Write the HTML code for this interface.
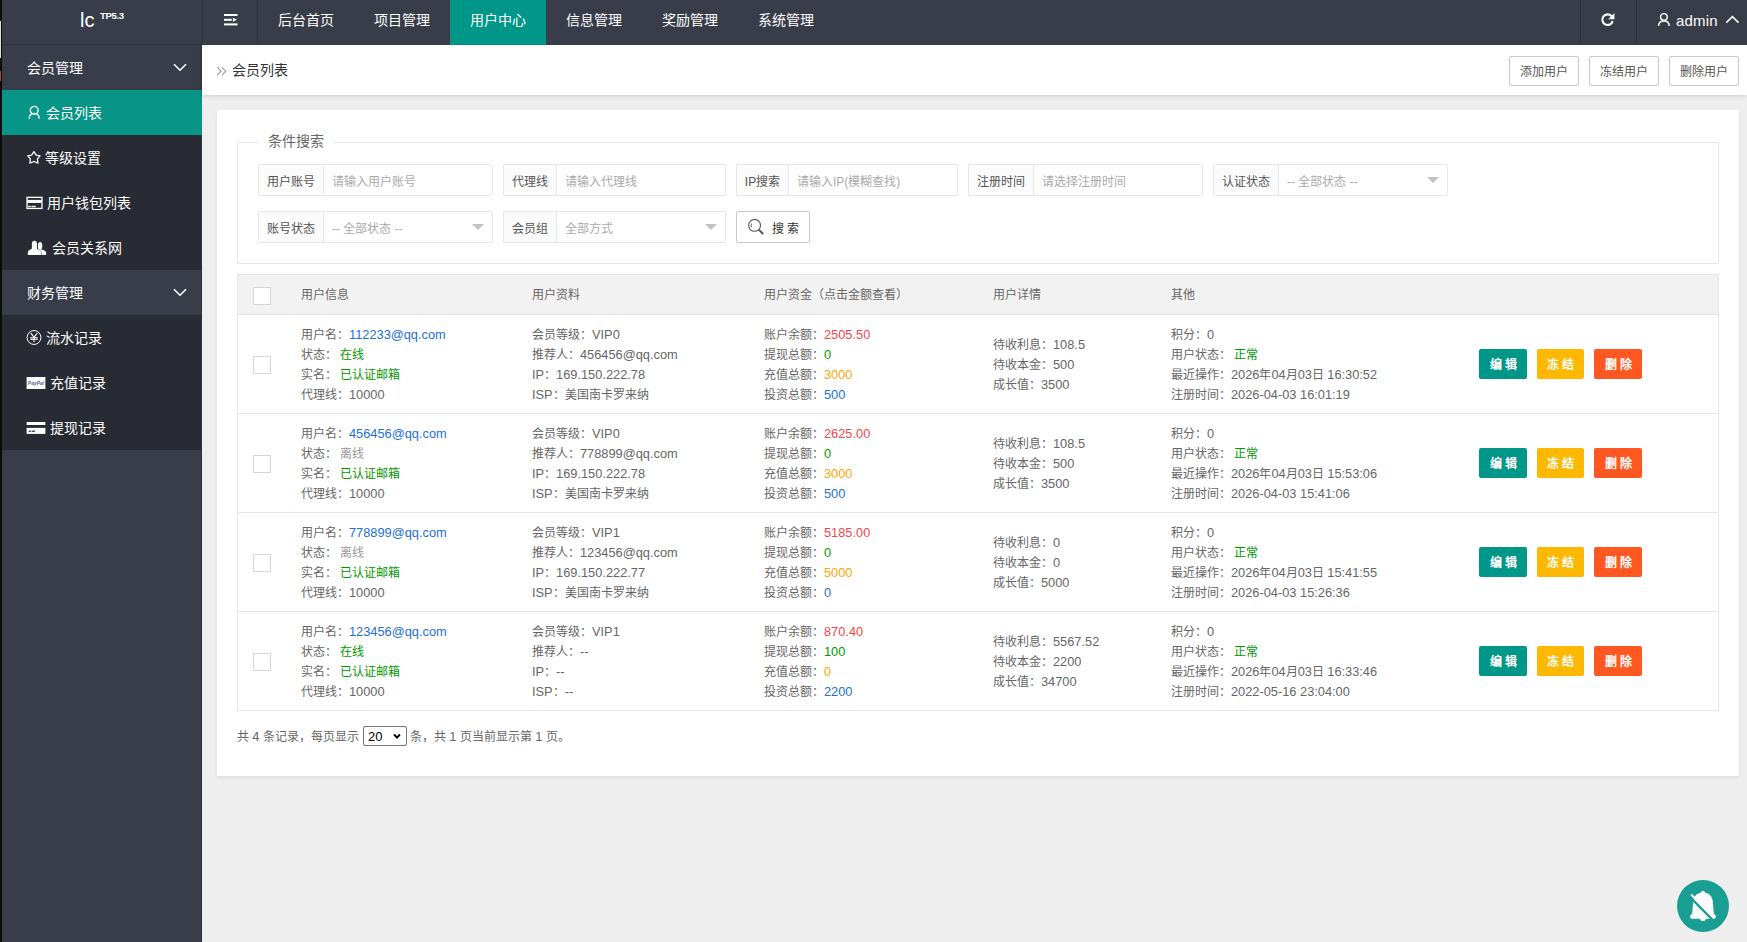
<!DOCTYPE html><html lang="zh-CN"><head><meta charset="utf-8"><title>会员列表</title><style>
*{margin:0;padding:0;box-sizing:border-box}
html,body{width:1747px;height:942px;overflow:hidden}
body{font-family:"Liberation Sans",sans-serif;font-size:14px;color:#666;background:#eeeeee;position:relative}
div,span,svg{position:absolute}
.t{white-space:nowrap}
.w{color:#fff}
.sep{top:0;width:1px;height:45px;background:#2f323c}
.nav{top:0;height:45px;width:96px;line-height:41px;color:#fff;text-align:center;font-size:14px}
.sub{left:0;width:200px;height:45px;background:#282B33}
.par{left:0;width:200px;height:45px;background:#393D49}
.mtx{line-height:20px;font-size:14px;color:#fff;white-space:nowrap}
.tbtn{top:56px;width:70px;height:30px;border:1px solid #c9c9c9;border-radius:2px;background:#fff;color:#555;font-size:12px;line-height:30px;text-align:center}
.ig{height:32px;border:1px solid #e6e6e6;border-radius:2px;background:#fff}
.lb{left:0;top:0;height:30px;background:#fbfbfb;border-right:1px solid #e6e6e6;color:#555;font-size:12px;line-height:34px;text-align:center}
.ph{top:2px;line-height:30px;font-size:12px;color:#aaa;white-space:nowrap}
.tri{width:0;height:0;border-left:6px solid transparent;border-right:6px solid transparent;border-top:6px solid #c2c2c2}
.cb{width:18px;height:18px;border:1px solid #d6d6d6;background:#fff}
.tl{font-size:12px;line-height:20px;color:#666;white-space:nowrap}
.n{position:static;font-size:12.8px}
.bl{color:#1E6FD9}
.gr{color:#009900}
.rd{color:#F04848}
.og{color:#FFA500}
.bt{top:0;height:30px;width:48px;color:#fff;font-size:12px;font-weight:bold;line-height:33px;text-align:center;border-radius:2px;letter-spacing:3px;text-indent:3px}
</style></head><body>
<div style="left:0;top:0;width:2px;height:942px;background:#0b0b0b"></div>
<div style="left:0;top:21px;width:1px;height:37px;background:#e0e0e0"></div>
<div style="left:0;top:71px;width:1px;height:10px;background:#b0502a"></div>
<div style="left:2px;top:0;width:200px;height:942px;background:#393D49">
<div style="left:0;top:44px;width:200px;height:1px;background:#30333d"></div>
<div class="t w" style="left:78px;top:6px;font-size:20px;line-height:28px">lc</div>
<div class="t w" style="left:98px;top:9.5px;font-size:9.6px;font-weight:bold;line-height:12px;letter-spacing:-0.35px">TP5.3</div>
<div class="par" style="top:45px">
<div class="mtx" style="left:25px;top:13px">会员管理</div><svg style="left:171px;top:18px" width="14" height="9" viewBox="0 0 14 9"><path d="M1 1.2 L7 7.2 L13 1.2" fill="none" stroke="#fff" stroke-width="1.6"/></svg></div>
<div class="sub" style="top:90px;background:#089487"><div class="mtx" style="left:44px;top:13px">会员列表</div>
<svg style="left:26px;top:14px" width="13" height="16" viewBox="0 0 13 16"><circle cx="6.2" cy="6.2" r="3.9" fill="none" stroke="#fff" stroke-width="1.3"/><path d="M1.2 14.8 C1.2 11.4 3.2 9.3 6.2 9.3 C9.2 9.3 11.2 11.4 11.2 14.8" fill="none" stroke="#fff" stroke-width="1.3"/></svg>
</div>
<div class="sub" style="top:135px;background:#282B33"><div class="mtx" style="left:43px;top:13px">等级设置</div>
<svg style="left:25px;top:15px" width="15" height="15" viewBox="0 0 15 15"><path d="M6.9 1.7 L9.2 5.1 L13 5.8 L10.4 8.9 L10.9 13.1 L6.9 11.5 L2.9 13.1 L3.4 8.9 L0.8 5.8 L4.6 5.1 Z" fill="none" stroke="#fff" stroke-width="1.3" stroke-linejoin="round"/></svg>
</div>
<div class="sub" style="top:180px;background:#282B33"><div class="mtx" style="left:45px;top:13px">用户钱包列表</div>
<svg style="left:24px;top:16px" width="17" height="14" viewBox="0 0 17 14"><rect x="1.05" y="1.35" width="14.9" height="11.1" fill="none" stroke="#fff" stroke-width="1.3"/><rect x="1" y="3.9" width="15" height="3.1" fill="#fff"/><rect x="2.2" y="9.8" width="2.6" height="1.4" fill="#fff"/><rect x="5.5" y="9.8" width="4.2" height="1.4" fill="#fff"/></svg>
</div>
<div class="sub" style="top:225px;background:#282B33"><div class="mtx" style="left:50px;top:13px">会员关系网</div>
<svg style="left:25px;top:15px" width="22" height="17" viewBox="0 0 22 17"><ellipse cx="13.1" cy="5.9" rx="2.2" ry="4" fill="#fff"/><path d="M11 9.8 L15.3 9.8 C17.7 10.3 19 11.3 19.1 13.1 L19.2 14.9 L12 14.9 Z" fill="#fff"/><g stroke="#282B33" stroke-width="0.9"><ellipse cx="7.45" cy="4.8" rx="2.6" ry="4" fill="#fff"/><path d="M0.8 14.9 L0.9 12.8 C1.1 10.6 2.6 9.6 5 9.1 L9.9 9.1 C12.3 9.6 13.8 10.6 14 12.8 L14.1 14.9 Z" fill="#fff"/></g><ellipse cx="7.45" cy="4.8" rx="2.6" ry="4" fill="#fff"/><path d="M0.8 14.9 L0.9 12.8 C1.1 10.6 2.6 9.6 5 9.1 L9.9 9.1 C12.3 9.6 13.8 10.6 14 12.8 L14.1 14.9 Z" fill="#fff"/><rect x="4.8" y="7" width="5.3" height="3" fill="#fff"/></svg>
</div>
<div class="par" style="top:270px"><div class="mtx" style="left:25px;top:13px">财务管理</div><svg style="left:171px;top:18px" width="14" height="9" viewBox="0 0 14 9"><path d="M1 1.2 L7 7.2 L13 1.2" fill="none" stroke="#fff" stroke-width="1.6"/></svg></div>
<div class="sub" style="top:315px"><div class="mtx" style="left:44px;top:13px">流水记录</div>
<svg style="left:24px;top:14px" width="16" height="17" viewBox="0 0 16 17"><circle cx="8" cy="8.5" r="6.95" fill="none" stroke="#fff" stroke-width="1"/><path d="M4.7 4.1 L8 8.1 L11.4 4.1 M8 8.1 L8 12.9 M4.2 8.7 L11.8 8.7 M4.2 10.3 L11.8 10.3" fill="none" stroke="#fff" stroke-width="1.1"/></svg>
</div>
<div class="sub" style="top:360px"><div class="mtx" style="left:48px;top:13px">充值记录</div>
<svg style="left:24px;top:16px" width="20" height="14" viewBox="0 0 20 14"><rect x="0.6" y="1" width="18.8" height="12" fill="#fff"/><text x="10" y="8.8" font-size="5" font-style="italic" font-weight="bold" text-anchor="middle" fill="#5a6488" font-family="Liberation Sans">PayPal</text></svg>
</div>
<div class="sub" style="top:405px"><div class="mtx" style="left:48px;top:13px">提现记录</div>
<svg style="left:24px;top:16px" width="20" height="14" viewBox="0 0 20 14"><rect x="0.6" y="1" width="18.8" height="3" fill="#fff"/><rect x="0.6" y="6.9" width="18.8" height="6" fill="#fff"/><rect x="2.7" y="9.6" width="2.2" height="1.2" fill="#282B33"/><rect x="5.6" y="9.6" width="3.4" height="1.2" fill="#282B33"/></svg>
</div>
<div style="left:199px;top:45px;width:1px;height:45px;background:#30333c"></div>
<div style="left:199px;top:135px;width:1px;height:807px;background:#30333c"></div>
</div>
<div style="left:202px;top:0;width:1545px;height:45px;background:#393D49">
<div class="sep" style="left:0"></div>
<div class="sep" style="left:55px"></div>
<svg style="left:21.5px;top:14px" width="14" height="13" viewBox="0 0 14 13"><rect x="0" y="0" width="13.5" height="2" fill="#fff"/><rect x="0" y="4.8" width="7.8" height="2" fill="#fff"/><path d="M8.9 3.8 L13 5.8 L8.9 7.8 Z" fill="#fff"/><rect x="0" y="9.4" width="13.5" height="2" fill="#fff"/></svg>
<div class="nav" style="left:56px;">后台首页</div>
<div class="nav" style="left:152px;">项目管理</div>
<div class="nav" style="left:248px;background:#009688;">用户中心</div>
<div class="nav" style="left:344px;">信息管理</div>
<div class="nav" style="left:440px;">奖励管理</div>
<div class="nav" style="left:536px;">系统管理</div>
<div class="sep" style="left:1378px"></div>
<div class="sep" style="left:1434px"></div>
<svg style="left:1398px;top:12px" width="16" height="16" viewBox="0 0 16 16"><path d="M12.7 9.1 A5.3 5.3 0 1 1 11.6 4.2" fill="none" stroke="#fff" stroke-width="2.1"/><path d="M14.4 1.1 L14.4 7.3 L8.3 7.3 Z" fill="#fff"/></svg>
<svg style="left:1455px;top:12px" width="14" height="16" viewBox="0 0 14 16"><circle cx="6.9" cy="4.9" r="3.3" fill="none" stroke="#fff" stroke-width="1.4"/><path d="M1.6 14 C1.6 10.9 3.8 9 6.9 9 C10 9 12.2 10.9 12.2 14" fill="none" stroke="#fff" stroke-width="1.4"/></svg>
<div class="t w" style="left:1474px;top:11px;font-size:15px;line-height:20px;letter-spacing:0.2px">admin</div>
<svg style="left:1523px;top:15px" width="15" height="10" viewBox="0 0 15 10"><path d="M1.3 7.6 L7.4 1.6 L13.5 7.6" fill="none" stroke="#fff" stroke-width="1.5"/></svg>
</div>
<div style="left:202px;top:45px;width:1545px;height:50px;background:#fff;box-shadow:0 1px 4px rgba(0,0,0,.13)">
<svg style="left:14px;top:21px" width="12" height="11" viewBox="0 0 12 11"><path d="M1.2 1.3 L5 5.2 L1.2 9.1 M6 1.3 L9.8 5.2 L6 9.1" fill="none" stroke="#9a9a9a" stroke-width="1.1"/></svg>
<div class="t" style="left:30px;top:15px;line-height:20px;font-size:14px;color:#333">会员列表</div>
</div>
<div class="tbtn" style="left:1509px">添加用户</div>
<div class="tbtn" style="left:1589px">冻结用户</div>
<div class="tbtn" style="left:1669px">删除用户</div>
<div style="left:217px;top:110px;width:1522px;height:666px;background:#fff;box-shadow:0 2px 4px rgba(0,0,0,.07)"></div>
<div style="left:237px;top:142px;width:1482px;height:122px;border:1px solid #e6e6e6"></div>
<div class="t" style="left:258px;top:132px;width:76px;height:20px;background:#fff"></div>
<div class="t" style="left:268px;top:131px;line-height:20px;font-size:14px;color:#666">条件搜索</div>
<div class="ig" style="left:258px;top:164px;width:235px">
<div class="lb" style="width:65px">用户账号</div>
<div class="ph" style="left:73px">请输入用户账号</div>
</div>
<div class="ig" style="left:503px;top:164px;width:223px">
<div class="lb" style="width:53px">代理线</div>
<div class="ph" style="left:61px">请输入代理线</div>
</div>
<div class="ig" style="left:736px;top:164px;width:222px">
<div class="lb" style="width:52px">IP搜索</div>
<div class="ph" style="left:60px">请输入IP(模糊查找)</div>
</div>
<div class="ig" style="left:968px;top:164px;width:235px">
<div class="lb" style="width:65px">注册时间</div>
<div class="ph" style="left:73px">请选择注册时间</div>
</div>
<div class="ig" style="left:1213px;top:164px;width:235px">
<div class="lb" style="width:65px">认证状态</div>
<div class="ph" style="left:73px">-- 全部状态 --</div>
<div class="tri" style="left:213px;top:12px"></div>
</div>
<div class="ig" style="left:258px;top:211px;width:235px">
<div class="lb" style="width:65px">账号状态</div>
<div class="ph" style="left:73px">-- 全部状态 --</div>
<div class="tri" style="left:213px;top:12px"></div>
</div>
<div class="ig" style="left:503px;top:211px;width:223px">
<div class="lb" style="width:53px">会员组</div>
<div class="ph" style="left:61px">全部方式</div>
<div class="tri" style="left:201px;top:12px"></div>
</div>
<div style="left:736px;top:211px;width:74px;height:32px;border:1px solid #c9c9c9;border-radius:2px;background:#fff">
<svg style="left:11px;top:7px" width="18" height="18" viewBox="0 0 18 18"><circle cx="6.6" cy="6.4" r="5.9" fill="none" stroke="#555" stroke-width="1.1"/><path d="M3.6 4.6 A3.6 3.6 0 0 0 3.8 8.2" fill="none" stroke="#555" stroke-width="0.9"/><path d="M11 10.9 L14.6 14.5" stroke="#555" stroke-width="1.9" stroke-linecap="round"/></svg>
<div class="t" style="left:35px;top:7px;line-height:20px;font-size:12px;color:#333">搜 索</div>
</div>
<div style="left:237px;top:274px;width:1482px;height:437px;border:1px solid #e6e6e6;background:#fff"></div>
<div style="left:238px;top:275px;width:1480px;height:39px;background:#f2f2f2"></div>
<div style="left:238px;top:314px;width:1480px;height:1px;background:#e6e6e6"></div>
<div style="left:238px;top:413px;width:1480px;height:1px;background:#e6e6e6"></div>
<div style="left:238px;top:512px;width:1480px;height:1px;background:#e6e6e6"></div>
<div style="left:238px;top:611px;width:1480px;height:1px;background:#e6e6e6"></div>
<div class="cb" style="left:253px;top:287px"></div>
<div class="tl" style="left:301px;top:285px">用户信息</div>
<div class="tl" style="left:532px;top:285px">用户资料</div>
<div class="tl" style="left:764px;top:285px">用户资金（点击金额查看）</div>
<div class="tl" style="left:993px;top:285px">用户详情</div>
<div class="tl" style="left:1171px;top:285px">其他</div>
<div class="cb" style="left:253px;top:356px"></div>
<div class="tl" style="left:301px;top:325px">用户名：<span class="bl" style="position:static;"><span class="n">112233@qq.com</span></span></div>
<div class="tl" style="left:301px;top:345px">状态： <span class="gr" style="position:static;">在线</span></div>
<div class="tl" style="left:301px;top:365px">实名： <span class="gr" style="position:static;">已认证邮箱</span></div>
<div class="tl" style="left:301px;top:385px">代理线：<span class="n">10000</span></div>
<div class="tl" style="left:532px;top:325px">会员等级：<span class="n">VIP0</span></div>
<div class="tl" style="left:532px;top:345px">推荐人：<span class="n">456456@qq.com</span></div>
<div class="tl" style="left:532px;top:365px"><span class="n">IP</span>：<span class="n">169.150.222.78</span></div>
<div class="tl" style="left:532px;top:385px"><span class="n">ISP</span>：美国南卡罗来纳</div>
<div class="tl" style="left:764px;top:325px">账户余额：<span class="rd" style="position:static;"><span class="n">2505.50</span></span></div>
<div class="tl" style="left:764px;top:345px">提现总额：<span class="gr" style="position:static;"><span class="n">0</span></span></div>
<div class="tl" style="left:764px;top:365px">充值总额：<span class="og" style="position:static;"><span class="n">3000</span></span></div>
<div class="tl" style="left:764px;top:385px">投资总额：<span class="bl" style="position:static;"><span class="n">500</span></span></div>
<div class="tl" style="left:1171px;top:325px">积分：<span class="n">0</span></div>
<div class="tl" style="left:1171px;top:345px">用户状态： <span class="gr" style="position:static;">正常</span></div>
<div class="tl" style="left:1171px;top:365px">最近操作：<span class="n">2026</span>年<span class="n">04</span>月<span class="n">03</span>日 <span class="n">16:30:52</span></div>
<div class="tl" style="left:1171px;top:385px">注册时间：<span class="n">2026-04-03 16:01:19</span></div>
<div class="tl" style="left:993px;top:335px">待收利息：<span class="n">108.5</span></div>
<div class="tl" style="left:993px;top:355px">待收本金：<span class="n">500</span></div>
<div class="tl" style="left:993px;top:375px">成长值：<span class="n">3500</span></div>
<div style="left:1479px;top:349px;width:170px;height:30px">
<div class="bt" style="left:0;background:#009688">编辑</div>
<div class="bt" style="left:58px;width:47px;background:#FFB800">冻结</div>
<div class="bt" style="left:115px;background:#FF5722">删除</div>
</div>
<div class="cb" style="left:253px;top:455px"></div>
<div class="tl" style="left:301px;top:424px">用户名：<span class="bl" style="position:static;"><span class="n">456456@qq.com</span></span></div>
<div class="tl" style="left:301px;top:444px">状态： <span style="position:static;color:#999">离线</span></div>
<div class="tl" style="left:301px;top:464px">实名： <span class="gr" style="position:static;">已认证邮箱</span></div>
<div class="tl" style="left:301px;top:484px">代理线：<span class="n">10000</span></div>
<div class="tl" style="left:532px;top:424px">会员等级：<span class="n">VIP0</span></div>
<div class="tl" style="left:532px;top:444px">推荐人：<span class="n">778899@qq.com</span></div>
<div class="tl" style="left:532px;top:464px"><span class="n">IP</span>：<span class="n">169.150.222.78</span></div>
<div class="tl" style="left:532px;top:484px"><span class="n">ISP</span>：美国南卡罗来纳</div>
<div class="tl" style="left:764px;top:424px">账户余额：<span class="rd" style="position:static;"><span class="n">2625.00</span></span></div>
<div class="tl" style="left:764px;top:444px">提现总额：<span class="gr" style="position:static;"><span class="n">0</span></span></div>
<div class="tl" style="left:764px;top:464px">充值总额：<span class="og" style="position:static;"><span class="n">3000</span></span></div>
<div class="tl" style="left:764px;top:484px">投资总额：<span class="bl" style="position:static;"><span class="n">500</span></span></div>
<div class="tl" style="left:1171px;top:424px">积分：<span class="n">0</span></div>
<div class="tl" style="left:1171px;top:444px">用户状态： <span class="gr" style="position:static;">正常</span></div>
<div class="tl" style="left:1171px;top:464px">最近操作：<span class="n">2026</span>年<span class="n">04</span>月<span class="n">03</span>日 <span class="n">15:53:06</span></div>
<div class="tl" style="left:1171px;top:484px">注册时间：<span class="n">2026-04-03 15:41:06</span></div>
<div class="tl" style="left:993px;top:434px">待收利息：<span class="n">108.5</span></div>
<div class="tl" style="left:993px;top:454px">待收本金：<span class="n">500</span></div>
<div class="tl" style="left:993px;top:474px">成长值：<span class="n">3500</span></div>
<div style="left:1479px;top:448px;width:170px;height:30px">
<div class="bt" style="left:0;background:#009688">编辑</div>
<div class="bt" style="left:58px;width:47px;background:#FFB800">冻结</div>
<div class="bt" style="left:115px;background:#FF5722">删除</div>
</div>
<div class="cb" style="left:253px;top:554px"></div>
<div class="tl" style="left:301px;top:523px">用户名：<span class="bl" style="position:static;"><span class="n">778899@qq.com</span></span></div>
<div class="tl" style="left:301px;top:543px">状态： <span style="position:static;color:#999">离线</span></div>
<div class="tl" style="left:301px;top:563px">实名： <span class="gr" style="position:static;">已认证邮箱</span></div>
<div class="tl" style="left:301px;top:583px">代理线：<span class="n">10000</span></div>
<div class="tl" style="left:532px;top:523px">会员等级：<span class="n">VIP1</span></div>
<div class="tl" style="left:532px;top:543px">推荐人：<span class="n">123456@qq.com</span></div>
<div class="tl" style="left:532px;top:563px"><span class="n">IP</span>：<span class="n">169.150.222.77</span></div>
<div class="tl" style="left:532px;top:583px"><span class="n">ISP</span>：美国南卡罗来纳</div>
<div class="tl" style="left:764px;top:523px">账户余额：<span class="rd" style="position:static;"><span class="n">5185.00</span></span></div>
<div class="tl" style="left:764px;top:543px">提现总额：<span class="gr" style="position:static;"><span class="n">0</span></span></div>
<div class="tl" style="left:764px;top:563px">充值总额：<span class="og" style="position:static;"><span class="n">5000</span></span></div>
<div class="tl" style="left:764px;top:583px">投资总额：<span class="bl" style="position:static;"><span class="n">0</span></span></div>
<div class="tl" style="left:1171px;top:523px">积分：<span class="n">0</span></div>
<div class="tl" style="left:1171px;top:543px">用户状态： <span class="gr" style="position:static;">正常</span></div>
<div class="tl" style="left:1171px;top:563px">最近操作：<span class="n">2026</span>年<span class="n">04</span>月<span class="n">03</span>日 <span class="n">15:41:55</span></div>
<div class="tl" style="left:1171px;top:583px">注册时间：<span class="n">2026-04-03 15:26:36</span></div>
<div class="tl" style="left:993px;top:533px">待收利息：<span class="n">0</span></div>
<div class="tl" style="left:993px;top:553px">待收本金：<span class="n">0</span></div>
<div class="tl" style="left:993px;top:573px">成长值：<span class="n">5000</span></div>
<div style="left:1479px;top:547px;width:170px;height:30px">
<div class="bt" style="left:0;background:#009688">编辑</div>
<div class="bt" style="left:58px;width:47px;background:#FFB800">冻结</div>
<div class="bt" style="left:115px;background:#FF5722">删除</div>
</div>
<div class="cb" style="left:253px;top:653px"></div>
<div class="tl" style="left:301px;top:622px">用户名：<span class="bl" style="position:static;"><span class="n">123456@qq.com</span></span></div>
<div class="tl" style="left:301px;top:642px">状态： <span class="gr" style="position:static;">在线</span></div>
<div class="tl" style="left:301px;top:662px">实名： <span class="gr" style="position:static;">已认证邮箱</span></div>
<div class="tl" style="left:301px;top:682px">代理线：<span class="n">10000</span></div>
<div class="tl" style="left:532px;top:622px">会员等级：<span class="n">VIP1</span></div>
<div class="tl" style="left:532px;top:642px">推荐人：<span class="n">--</span></div>
<div class="tl" style="left:532px;top:662px"><span class="n">IP</span>：<span class="n">--</span></div>
<div class="tl" style="left:532px;top:682px"><span class="n">ISP</span>：<span class="n">--</span></div>
<div class="tl" style="left:764px;top:622px">账户余额：<span class="rd" style="position:static;"><span class="n">870.40</span></span></div>
<div class="tl" style="left:764px;top:642px">提现总额：<span class="gr" style="position:static;"><span class="n">100</span></span></div>
<div class="tl" style="left:764px;top:662px">充值总额：<span class="og" style="position:static;"><span class="n">0</span></span></div>
<div class="tl" style="left:764px;top:682px">投资总额：<span class="bl" style="position:static;"><span class="n">2200</span></span></div>
<div class="tl" style="left:1171px;top:622px">积分：<span class="n">0</span></div>
<div class="tl" style="left:1171px;top:642px">用户状态： <span class="gr" style="position:static;">正常</span></div>
<div class="tl" style="left:1171px;top:662px">最近操作：<span class="n">2026</span>年<span class="n">04</span>月<span class="n">03</span>日 <span class="n">16:33:46</span></div>
<div class="tl" style="left:1171px;top:682px">注册时间：<span class="n">2022-05-16 23:04:00</span></div>
<div class="tl" style="left:993px;top:632px">待收利息：<span class="n">5567.52</span></div>
<div class="tl" style="left:993px;top:652px">待收本金：<span class="n">2200</span></div>
<div class="tl" style="left:993px;top:672px">成长值：<span class="n">34700</span></div>
<div style="left:1479px;top:646px;width:170px;height:30px">
<div class="bt" style="left:0;background:#009688">编辑</div>
<div class="bt" style="left:58px;width:47px;background:#FFB800">冻结</div>
<div class="bt" style="left:115px;background:#FF5722">删除</div>
</div>
<div class="tl" style="left:237px;top:727px">共 <span class="n">4</span> 条记录，每页显示</div>
<div style="left:363px;top:726px;width:44px;height:20px;border:1px solid #767676;border-radius:2px;background:#fff">
<div class="t" style="left:4px;top:1px;line-height:18px;font-size:13px;color:#000">20</div>
<svg style="left:29px;top:6px" width="9" height="8" viewBox="0 0 9 8"><path d="M1.1 1.5 L4 4.6 L6.9 1.5" fill="none" stroke="#000" stroke-width="1.9"/></svg>
</div>
<div class="tl" style="left:410px;top:727px">条，共 <span class="n">1</span> 页当前显示第 <span class="n">1</span> 页。</div>
<div style="left:1677px;top:880px;width:52px;height:52px;border-radius:50%;background:#189E93">
<svg style="left:0;top:0" width="52" height="52" viewBox="0 0 52 52"><circle cx="25.9" cy="12.9" r="2.1" fill="#fff"/><path d="M26 12.6 C19.6 12.6 16.6 16.6 16.1 22 L15.4 31.5 C15.2 33.8 14.2 34.8 13.3 35.6 C12.6 36.4 12.9 38.7 15 38.7 L37 38.7 C39.1 38.7 39.4 36.4 38.7 35.6 C37.8 34.8 36.8 33.8 36.6 31.5 L35.9 22 C35.4 16.6 32.4 12.6 26 12.6 Z" fill="#fff"/><path d="M22.8 38.5 C23.3 40.4 24.5 41.1 26 41.1 C27.5 41.1 28.7 40.4 29.2 38.5 Z" fill="#fff"/><path d="M12.4 16.4 L36 40.4" stroke="#189E93" stroke-width="2.3"/><path d="M14.1 14.5 L36.8 37.6" stroke="#fff" stroke-width="2"/></svg>
</div>
</body></html>
